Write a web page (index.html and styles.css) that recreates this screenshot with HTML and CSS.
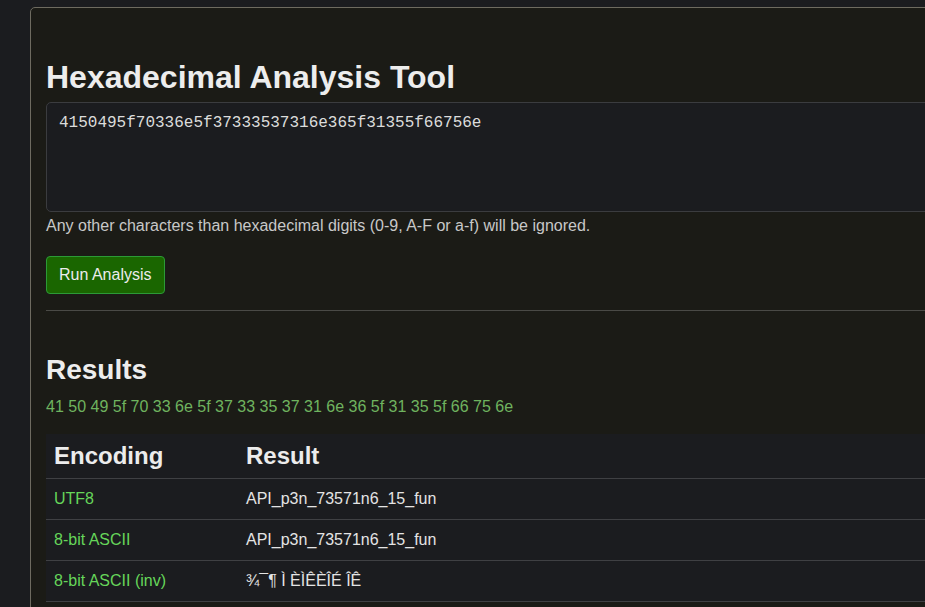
FILE: index.html
```html
<!DOCTYPE html>
<html lang="en">
<head>
<meta charset="utf-8">
<title>Hexadecimal Analysis Tool</title>
<link rel="stylesheet" href="styles.css">
</head>
<body>
<main class="card">
  <h1 class="title">Hexadecimal Analysis Tool</h1>
  <textarea class="hex-input" spellcheck="false">4150495f70336e5f37333537316e365f31355f66756e</textarea>
  <p class="help">Any other characters than hexadecimal digits (0-9, A-F or a-f) will be ignored.</p>
  <button class="run-btn" type="button">Run Analysis</button>
  <hr class="divider">
  <h2 class="results-title">Results</h2>
  <p class="hex-bytes">41 50 49 5f 70 33 6e 5f 37 33 35 37 31 6e 36 5f 31 35 5f 66 75 6e</p>
  <table class="results">
    <thead>
      <tr><th class="col-enc">Encoding</th><th>Result</th></tr>
    </thead>
    <tbody>
      <tr><td class="enc">UTF8</td><td>API_p3n_73571n6_15_fun</td></tr>
      <tr><td class="enc">8-bit ASCII</td><td>API_p3n_73571n6_15_fun</td></tr>
      <tr><td class="enc">8-bit ASCII (inv)</td><td>¾¯¶ Ì ÈÌÊÈÎÉ ÎÊ</td></tr>
    </tbody>
  </table>
</main>
</body>
</html>
```

FILE: styles.css
```css
* { box-sizing: border-box; }

html, body {
  margin: 0;
  padding: 0;
  background: #1b1c1f;
  overflow: hidden;
}

body {
  font-family: "Liberation Sans", Arial, sans-serif;
  color: #e6e6e6;
  padding: 7px 0 0 30px;
}

.card {
  width: 1000px;
  min-height: 700px;
  background: #1b1b16;
  border: 1px solid #6e6b60;
  border-radius: 5px;
  padding: 50px 15px 20px 15px;
}

.title {
  margin: 0 0 6px 0;
  font-size: 32px;
  line-height: 38px;
  font-weight: 700;
  color: #ededed;
}

.hex-input {
  display: block;
  width: 100%;
  height: 110px;
  margin: 0;
  padding: 8px 12px;
  background: #1b1c1f;
  border: 1px solid #3b3c3f;
  border-radius: 5px;
  color: #dcdcdc;
  font-family: "Liberation Mono", "Courier New", monospace;
  font-size: 16px;
  line-height: 24px;
  resize: none;
  outline: none;
}

.help {
  margin: 2px 0 0 0;
  font-size: 16px;
  line-height: 24px;
  color: #c8c8c8;
}

.run-btn {
  display: block;
  margin-top: 18px;
  height: 38px;
  padding: 0 12px;
  background: #1a6600;
  border: 1px solid #2c9a36;
  border-radius: 4px;
  color: #ececec;
  font-family: "Liberation Sans", Arial, sans-serif;
  font-size: 16px;
}

.divider {
  margin: 16px 0 0 0;
  border: 0;
  border-top: 1px solid #4a4a46;
}

.results-title {
  margin: 42px 0 8px 0;
  font-size: 28px;
  line-height: 34px;
  font-weight: 700;
  color: #ededed;
}

.hex-bytes {
  margin: 0 0 15px 0;
  font-size: 16px;
  line-height: 24px;
  color: #6fb35f;
}

.results {
  width: 100%;
  border-collapse: collapse;
  background: #1b1c1f;
}

.results th {
  text-align: left;
  font-size: 24px;
  line-height: 28px;
  font-weight: 700;
  color: #ececec;
  padding: 8px 8px 8px 8px;
  border-bottom: 1px solid #3f4043;
}

.results .col-enc { width: 192px; }

.results td {
  font-size: 16px;
  line-height: 24px;
  color: #e4e4e4;
  padding: 8px 8px;
  border-bottom: 1px solid #3f4043;
}

.results td.enc { color: #66d65a; }
```
